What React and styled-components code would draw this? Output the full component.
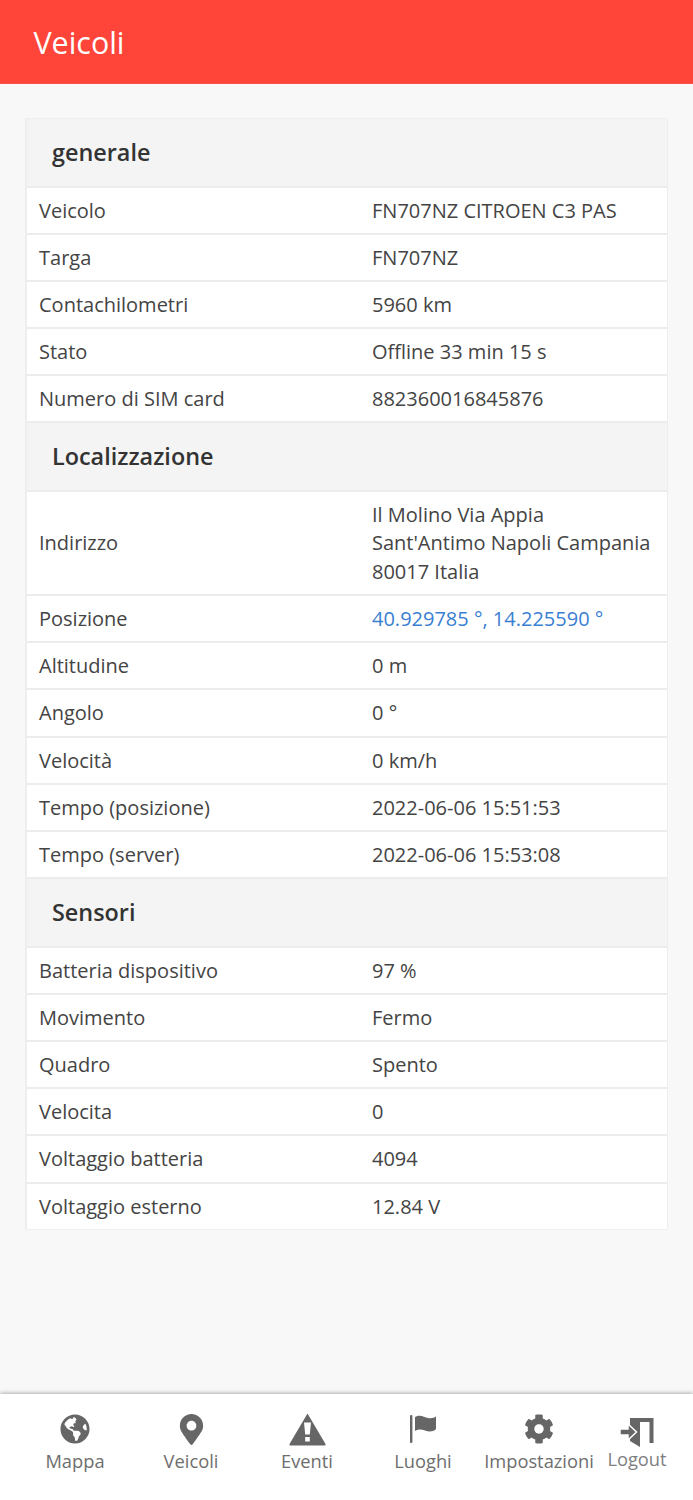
import React from 'react'
import styled, { createGlobalStyle } from 'styled-components'
import { FaGlobeAmericas, FaMapMarkerAlt, FaCog } from 'react-icons/fa'

const GlobalStyle = createGlobalStyle`
  html, body { margin: 0; padding: 0; }
  body {
    background: #f8f8f8;
    font-family: "Open Sans", "Liberation Sans", sans-serif;
    color: #444;
  }
`
const Page = styled.div`
  width: 693px;
  height: 1500px;
  display: flex;
  flex-direction: column;
  overflow: hidden;
`
const Header = styled.header`
  height: 84px;
  background: #ff4539;
  color: #fff;
  font-size: 30.4px;
  line-height: 85px;
  padding-left: 33.5px;
  box-sizing: border-box;
  border-bottom: 1px solid #f4524a;
`
const Content = styled.main`
  flex: 1;
  padding: 34px 25px 0;
`
const Card = styled.div`
  background: #fff;
  border: 1px solid #eee;
  border-left-width: 2px;
  border-radius: 2px;
`
const SectionTitle = styled.div`
  height: 68.5px;
  box-sizing: border-box;
  padding-left: 25px;
  background: #f4f4f4;
  border-bottom: 2px solid #ececec;
  color: #333;
  font-size: 23.4px;
  font-weight: 600;
  line-height: 67.5px;
`
const Row = styled.div`
  display: grid;
  grid-template-columns: 333px 1fr;
  align-items: center;
  box-sizing: border-box;
  padding: 1.5px 12px 0;
  min-height: 47.2px;
  border-bottom: 2px solid #ececec;
  font-size: 20px;
  line-height: 28.5px;
  &:last-child { border-bottom: none; min-height: 45.5px; }
`
const Value = styled.div`
  color: ${props => props.$link ? '#3a80d2' : '#444'};
  padding: ${props => props.$multi ? '7.5px 0' : '0'};
`
const TabBar = styled.nav`
  height: 106px;
  box-sizing: border-box;
  background: #fff;
  box-shadow: 0 -1px 4px rgba(0,0,0,.3);
  display: grid;
  grid-template-columns: 116px 116px 116px 116px 116px 80px;
  padding: 0 0 0 17px;
  position: relative;
`
const Tab = styled.div`
  display: flex;
  flex-direction: column;
  align-items: center;
  padding-top: ${props => props.$compact ? 23 : 18}px;
  color: ${props => props.$compact ? '#808080' : '#6e6e6e'};
  font-size: 18.3px;
  line-height: 26px;
  white-space: nowrap;
`
const IconBox = styled.div`
  height: ${props => props.$compact ? 29 : 34}px;
  margin-bottom: ${props => props.$compact ? 0 : 2}px;
  display: flex;
  align-items: center;
  justify-content: center;
  color: #666;
`

const TriangleIcon = () => (
  <svg width="37" height="33" viewBox="0 0 37 33" fill="#666">
    <path fillRule="evenodd" d="M18.500 0.500 L36.500 31 Q37 32.500 35.500 32.500 H1.500 Q0 32.500 0.500 31 Z M15 9.500 L16.200 21.500 H20.800 L22 9.500 Z M16.200 24 V28.500 H20.800 V24 Z" />
  </svg>
)
const FlagIcon = () => (
  <svg width="28" height="30" viewBox="0 0 28 30" fill="#666">
    <rect x="1" y="1" width="2.400" height="28" rx="1" />
    <path d="M6 3 C11 0 15 3 19 4 C22 4.600 25 4 27 2.500 V15 C24 18 20 18 16 16.500 C12 15 9 15 6 17 Z" />
  </svg>
)
const LogInIcon = () => (
  <svg width="36" height="30" viewBox="0 0 36 30">
    <path fill="#666" d="M11 1 H34.500 V26 H30.500 V5 H21 V30 L11 24 Z" />
    <path fill="#666" stroke="#fff" strokeWidth="1.500" d="M1 12 H9 V7 L17.500 15 L9 23 V18 H1 Z" />
  </svg>
)

const sections = [
  { title: 'generale', rows: [
    ['Veicolo', 'FN707NZ CITROEN C3 PAS'],
    ['Targa', 'FN707NZ'],
    ['Contachilometri', '5960 km'],
    ['Stato', 'Offline 33 min 15 s'],
    ['Numero di SIM card', '882360016845876'],
  ] },
  { title: 'Localizzazione', rows: [
    ['Indirizzo', ['Il Molino Via Appia', "Sant'Antimo Napoli Campania", '80017 Italia']],
    ['Posizione', '40.929785 °, 14.225590 °', true],
    ['Altitudine', '0 m'],
    ['Angolo', '0 °'],
    ['Velocità', '0 km/h'],
    ['Tempo (posizione)', '2022-06-06 15:51:53'],
    ['Tempo (server)', '2022-06-06 15:53:08'],
  ] },
  { title: 'Sensori', rows: [
    ['Batteria dispositivo', '97 %'],
    ['Movimento', 'Fermo'],
    ['Quadro', 'Spento'],
    ['Velocita', '0'],
    ['Voltaggio batteria', '4094'],
    ['Voltaggio esterno', '12.84 V'],
  ] },
]

const tabs = [
  { label: 'Mappa', icon: <FaGlobeAmericas size={30} /> },
  { label: 'Veicoli', icon: <FaMapMarkerAlt size={31} /> },
  { label: 'Eventi', icon: <TriangleIcon /> },
  { label: 'Luoghi', icon: <FlagIcon /> },
  { label: 'Impostazioni', icon: <FaCog size={30} /> },
  { label: 'Logout', icon: <LogInIcon />, compact: true },
]

export default function App() {
  return (
    <Page>
      <GlobalStyle />
      <Header>Veicoli</Header>
      <Content>
        <Card>
          {sections.map(section => (
            <React.Fragment key={section.title}>
              <SectionTitle>{section.title}</SectionTitle>
              {section.rows.map(([label, value, link]) => (
                <Row key={label}>
                  <div>{label}</div>
                  {Array.isArray(value)
                    ? <Value $multi>{value.map(line => <div key={line}>{line}</div>)}</Value>
                    : <Value $link={link}>{value}</Value>}
                </Row>
              ))}
            </React.Fragment>
          ))}
        </Card>
      </Content>
      <TabBar>
        {tabs.map(tab => (
          <Tab key={tab.label} $compact={tab.compact}>
            <IconBox $compact={tab.compact}>{tab.icon}</IconBox>
            {tab.label}
          </Tab>
        ))}
      </TabBar>
    </Page>
  )
}
